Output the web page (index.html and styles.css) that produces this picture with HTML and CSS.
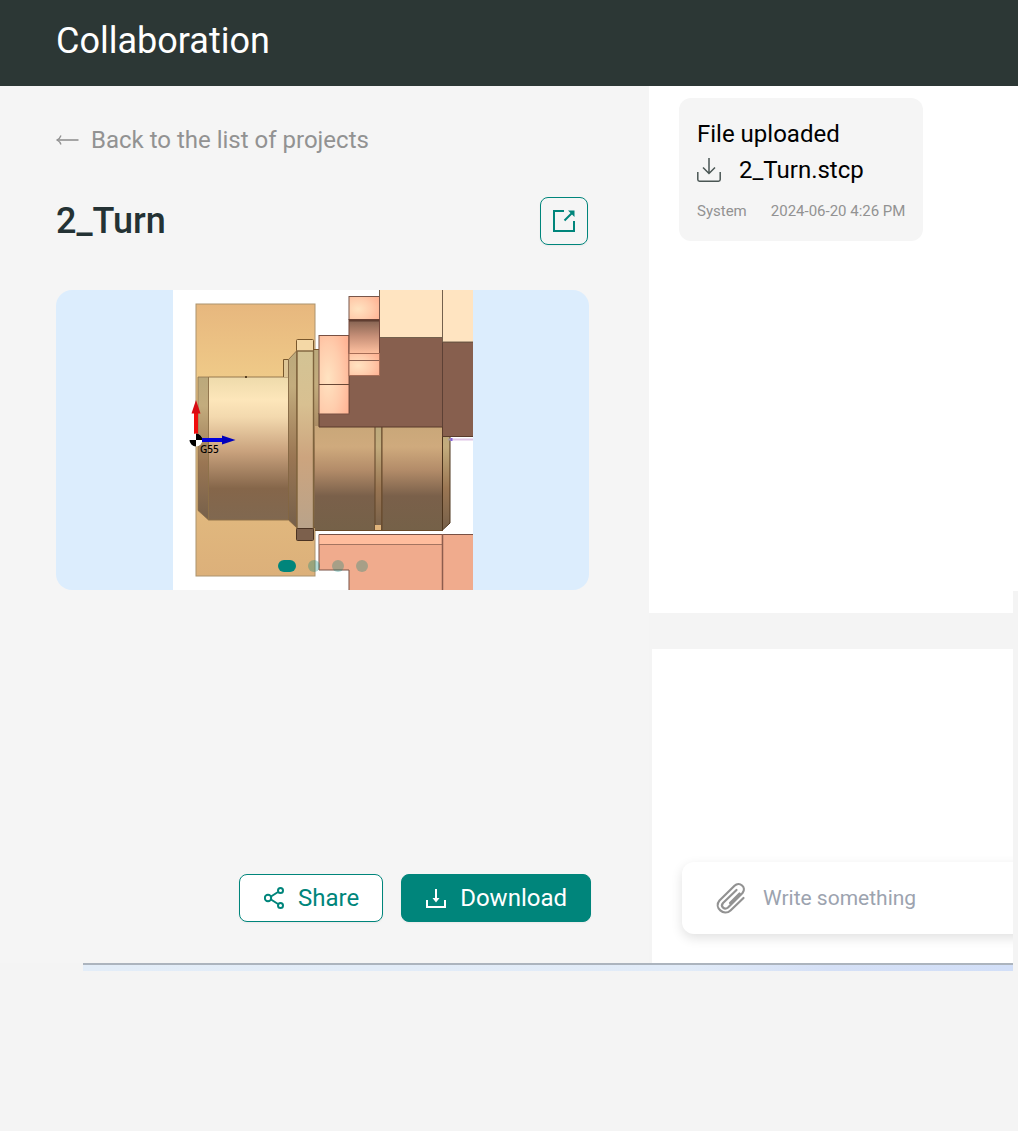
FILE: index.html
```html
<!DOCTYPE html>
<html lang="en">
<head>
<meta charset="utf-8">
<meta name="viewport" content="width=device-width, initial-scale=1">
<title>Collaboration</title>
<link rel="stylesheet" href="styles.css">
</head>
<body>
<header class="topbar"><h1 class="topbar-title">Collaboration</h1></header>
<main class="workspace">
  <section class="project">
    <a class="back" href="#projects">
      <svg class="back-icon" viewBox="0 0 23 12" width="23" height="12" fill="none" stroke="currentColor"><path d="M1 6H22.500" stroke-width="1.600"/><path d="M5 1.500Q4 4.500 1 6Q4 7.500 5 10.500" stroke-width="1.300"/></svg>
      Back to the list of projects
    </a>
    <div class="project-head">
      <h2 class="project-title">2_Turn</h2>
      <button class="btn btn-square" type="button" aria-label="Open project">
        <svg viewBox="0 0 24 24" width="24" height="24" fill="none" stroke="currentColor" stroke-width="2"><path d="M12 2H2V22H22V12M12.500 11.500L20 4"/><path d="M16 1.500H22.500V8Z" fill="currentColor" stroke="none"/></svg>
      </button>
    </div>
    <div class="preview">
      <svg class="scene" viewBox="173 290 300 300" role="img" aria-label="Turned part in the machine">
        <defs>
          <linearGradient id="stock" x1="0" y1="0" x2="0" y2="1"><stop offset="0" stop-color="#e7b77e"/><stop offset=".27" stop-color="#efca88"/><stop offset=".65" stop-color="#e3bc80"/><stop offset="1" stop-color="#dcb07a"/></linearGradient>
          <linearGradient id="part" x1="0" y1="0" x2="0" y2="1"><stop offset="0" stop-color="#eedbab"/><stop offset=".16" stop-color="#fde6ba"/><stop offset=".28" stop-color="#f3d9ae"/><stop offset=".52" stop-color="#c9a27d"/><stop offset=".78" stop-color="#85664a"/><stop offset="1" stop-color="#806850"/></linearGradient>
          <linearGradient id="edge" x1="0" y1="0" x2="0" y2="1"><stop offset="0" stop-color="#bba97c"/><stop offset=".2" stop-color="#c3ac7d"/><stop offset=".6" stop-color="#9a7653"/><stop offset="1" stop-color="#76604a"/></linearGradient>
          <linearGradient id="flange" x1="0" y1="0" x2="0" y2="1"><stop offset="0" stop-color="#d3c394"/><stop offset=".3" stop-color="#d8c091"/><stop offset=".6" stop-color="#cca47e"/><stop offset="1" stop-color="#b9a38a"/></linearGradient>
          <linearGradient id="shaft" x1="0" y1="0" x2="0" y2="1"><stop offset="0" stop-color="#c9a779"/><stop offset=".2" stop-color="#cfaa7d"/><stop offset=".42" stop-color="#b38c69"/><stop offset=".67" stop-color="#7a604a"/><stop offset="1" stop-color="#756148"/></linearGradient>
          <radialGradient id="jaw" cx=".3" cy=".55" r=".8"><stop offset="0" stop-color="#ffe3c1"/><stop offset=".55" stop-color="#ffccac"/><stop offset="1" stop-color="#ffb394"/></radialGradient>
          <linearGradient id="bore" x1="0" y1="0" x2="0" y2="1"><stop offset="0" stop-color="#81604f"/><stop offset=".5" stop-color="#c79078"/><stop offset="1" stop-color="#ffc1a0"/></linearGradient>
        </defs>
        <rect x="173" y="290" width="300" height="300" fill="#fff"/>
        <rect x="196" y="304" width="119" height="272" fill="url(#stock)" stroke="#ac936e"/>
        <path d="M198 377H208.500V520L198 510.500Z" fill="url(#edge)" stroke="#866b48" stroke-width=".7"/>
        <path d="M208.500 377H288.500V520H208.500Z" fill="url(#part)" stroke="#8c7048" stroke-width=".9"/>
        <path d="M283.500 377V359.500H288.500V377" fill="#dec696" stroke="#77572c"/>
        <path d="M245 377h2" stroke="#594123" stroke-width="2"/>
        <path d="M288.500 359.500L296.500 351V527.500L288.500 520Z" fill="url(#edge)" stroke="#826541" stroke-width=".8"/>
        <rect x="313.500" y="349.500" width="7" height="178" fill="url(#edge)" stroke="#78572c"/>
        <rect x="296.500" y="339.500" width="17" height="12" rx="1" fill="#f4d8a6" stroke="#79572c"/>
        <rect x="297" y="351" width="16.500" height="178" fill="url(#flange)" stroke="#7e633d" stroke-width="1.400"/>
        <rect x="296.500" y="528.500" width="17" height="12" rx="1" fill="#7c604c" stroke="#4b3322"/>
        <rect x="315" y="426" width="60" height="104.500" fill="url(#shaft)"/>
        <rect x="375" y="426" width="7" height="104" fill="url(#edge)" stroke="#604528"/>
        <rect x="375" y="525" width="6" height="5" fill="#e0b47b"/>
        <rect x="382" y="426" width="60.500" height="104.500" fill="url(#shaft)" stroke="#66492b"/>
        <path d="M442.500 426H450V523L442.500 530Z" fill="url(#edge)" stroke="#4c341d"/>
        <path d="M315 530.500H442.500" stroke="#694a28"/>
        <path d="M319 413H349V375H379.500V337.500H442.500V342H474V436.500H442.500V427H319Z" fill="#875f4e" stroke="#593b2b"/>
        <path d="M442.500 342V427" stroke="#5d4035"/>
        <path d="M379.500 289H442.500V337.500H379.500Z" fill="#ffe4c1" stroke="#74604d"/>
        <path d="M442.500 289H474V342H442.500Z" fill="#ffe4c1" stroke="#74604d"/>
        <rect x="319" y="335.500" width="30" height="78.500" fill="url(#jaw)" stroke="#785043"/>
        <path d="M319 384.500H349" stroke="#684735"/>
        <rect x="349" y="296.500" width="30.500" height="23" fill="url(#jaw)" stroke="#78564a"/>
        <rect x="349" y="319.500" width="30.500" height="34" fill="url(#bore)" stroke="#73463b"/>
        <path d="M349 320.500H379" stroke="#5f3d30" stroke-width="2"/>
        <rect x="349" y="353.500" width="30.500" height="22" fill="url(#jaw)" stroke="#a66d56"/>
        <path d="M349 360.500H379" stroke="#8c6151"/>
        <path d="M319 534.500H474V591H349V570H319Z" fill="#f0ab8d" stroke="#785044"/>
        <rect x="319.500" y="535" width="122" height="9" fill="#ffbd9d"/>
        <path d="M319 544.500H442" stroke="#a47460"/><path d="M442.500 534V590" stroke="#8d5c4d" stroke-width="1.500"/>
        <path d="M451 439.500H473" stroke="#dfc6e6" stroke-width="2"/><path d="M448 439.500H451" stroke="#a99a9e" stroke-width="2"/><path d="M451.500 438V441" stroke="#8562dc" stroke-width="2"/>
        <path d="M196 434V412" stroke="#f00d0d" stroke-width="4"/><path d="M196 400L200.500 413.500H191.500Z" fill="#d80b13"/>
        <circle cx="196" cy="440" r="6.500" fill="#fff"/><path d="M196 440V433.500A6.500 6.500 0 0 1 202.500 440ZM196 440V446.500A6.500 6.500 0 0 1 189.500 440Z" fill="#000"/>
        <path d="M202 440H223" stroke="#00d" stroke-width="4"/><path d="M235.500 440L222 435.500V444.500Z" fill="#00b"/>
        <text class="scene-label" x="200" y="453">G55</text>
      </svg>
      <div class="dots">
        <button class="dot dot-active" type="button" aria-label="Picture 1"></button>
        <button class="dot" type="button" aria-label="Picture 2"></button>
        <button class="dot" type="button" aria-label="Picture 3"></button>
        <button class="dot" type="button" aria-label="Picture 4"></button>
      </div>
    </div>
    <div class="actions">
      <button class="btn btn-share" type="button">
        <svg viewBox="0 0 20 22" width="20" height="22" fill="none" stroke="currentColor" stroke-width="2"><circle cx="4" cy="11" r="3.200"/><circle cx="16.500" cy="3.500" r="2.500"/><circle cx="16.500" cy="18.500" r="2.500"/><path d="M7 9.500L14 5M7 12.500L14 17"/></svg>
        Share
      </button>
      <button class="btn btn-primary" type="button">
        <svg viewBox="0 0 20 20" width="20" height="20" fill="none" stroke="currentColor" stroke-width="2"><path d="M1 12V19H19V12M10 1V12"/><path d="M6.500 10H13.500L10 14.500Z" fill="currentColor" stroke="none"/></svg>
        Download
      </button>
    </div>
  </section>
  <section class="chat" aria-label="Messages">
    <div class="log">
      <article class="message">
        <p class="message-text">File uploaded</p>
        <a class="file" href="#file">
          <svg viewBox="0 0 24 24" width="24" height="24" fill="none" stroke="#4a5654" stroke-width="1.500"><path d="M.800 14V21.500Q.800 23.200 2.500 23.200H21.500Q23.200 23.200 23.200 21.500V14M12 0V15M6 9.500L12 15.500L18 9.500"/></svg>
          2_Turn.stcp
        </a>
        <p class="meta"><span>System</span><time>2024-06-20 4:26 PM</time></p>
      </article>
    </div>
    <div class="log-end"></div>
    <div class="compose-area">
      <div class="compose">
        <button class="attach" type="button" aria-label="Attach a file">
          <svg viewBox="0 0 30 32" width="30" height="32" fill="none" stroke="#929292" stroke-width="2.200" stroke-linecap="round" stroke-linejoin="round"><path d="M27.500 16L14.500 28.500C8 34.500-2.500 25.500 3.500 18.500L18.500 3.800C23.500-1 31 5.500 26.500 11L12 25.500C8.500 28.500 4 24.500 7 21L20.500 8M23.500 11.500L14 21"/></svg>
        </button>
        <input class="compose-input" type="text" placeholder="Write something" aria-label="Write something">
      </div>
    </div>
  </section>
  <div class="baseline"></div>
</main>
</body>
</html>
```
FILE: styles.css
```css
* { box-sizing: border-box; }
body { margin: 0; background: #f4f4f4; font-family: Roboto, "Liberation Sans", sans-serif; color: #000; }
h1, h2, p { margin: 0; }
svg { display: block; flex: none; }
button { font: inherit; padding: 0; cursor: pointer; }

.topbar { height: 86px; padding: 0 56px; background: #2c3735; color: #fff; }
.topbar-title { font-size: 36px; font-weight: 400; line-height: 82px; }

.workspace { display: grid; grid-template-columns: minmax(0, 1fr) 369px; }
.project { display: flex; flex-direction: column; padding: 40px 60px 41px 56px; background: #f5f5f5; }
.back { display: flex; align-items: center; gap: 12px; font-size: 24px; line-height: 28px; color: #929292; text-decoration: none; }
.project-head { display: flex; justify-content: space-between; align-items: center; margin-top: 43px; padding-right: 1px; }
.project-title { font-size: 36px; font-weight: 500; line-height: 48px; color: #243234; }

.btn { display: flex; align-items: center; justify-content: center; height: 48px; border: 1px solid #00857b; border-radius: 8px; color: #00857b; font-size: 24px; box-shadow: 0 1px 2px rgba(0, 0, 0, .05); }
.btn-square { width: 48px; background: transparent; }
.btn-share { gap: 14px; padding: 0 23px 0 24px; background: #fff; }
.btn-primary { gap: 14px; padding: 0 23px 0 24px; background: #00857b; color: #fff; }

.preview { position: relative; display: flex; justify-content: center; margin-top: 45px; overflow: hidden; border-radius: 16px; background: #dcedfd; }
.scene { width: 300px; height: 300px; }
.scene-label { font: 500 10px "Noto Sans", sans-serif; }
.dots { position: absolute; inset: auto 0 18px; display: flex; justify-content: center; gap: 12px; }
.dot { width: 12px; height: 12px; border: 0; border-radius: 6px; background: #00857b; opacity: .3; }
.dot-active { width: 18px; opacity: 1; }
.actions { display: flex; justify-content: flex-end; gap: 18px; margin-top: auto; margin-right: -2px; }

.chat { display: flex; flex-direction: column; }
.log { min-height: 505px; padding: 12px 30px; background: #fff; }
.message { width: fit-content; padding: 18px; border-radius: 12px; background: #f5f5f5; }
.message-text, .file { font-size: 24px; line-height: 36px; }
.file { display: flex; align-items: center; gap: 18px; color: inherit; text-decoration: none; }
.meta { display: flex; gap: 24px; margin-top: 12px; font-size: 15px; line-height: 23px; color: #929292; }
.log-end { height: 22px; margin-right: 5px; background: #fff; }
.compose-area { flex: 1; min-height: 314px; display: flex; align-items: flex-end; margin: 36px 5px 0 3px; padding: 0 0 29px 30px; overflow: hidden; background: #fff; }
.compose { display: flex; align-items: center; flex: 1; gap: 17px; height: 72px; padding-left: 34px; border-radius: 12px 0 0 12px; background: #fff; box-shadow: 0 4px 12px rgba(0, 0, 0, .12); }
.attach { border: 0; background: none; }
.compose-input { flex: 1; min-width: 0; padding: 0; border: 0; outline: 0; background: none; font: inherit; font-size: 21px; }
.compose-input::placeholder { color: #9ca3af; opacity: 1; }
.baseline { grid-column: 1 / -1; height: 8px; margin: 0 5px 0 83px; border-top: 2px solid #acb4be; background: linear-gradient(90deg, #e3edf8 0%, #e1ebf8 65%, #d5e0f6 80%, #d2dff8 100%); }
```
